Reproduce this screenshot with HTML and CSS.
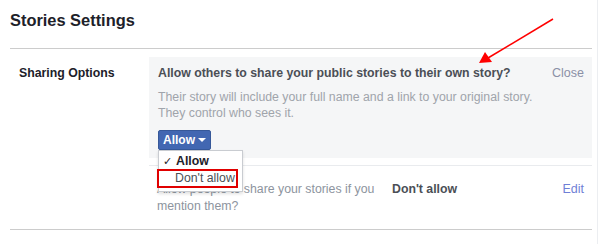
FILE: index.html
```html
<!DOCTYPE html>
<html lang="en">
  <head>
    <meta charset="UTF-8" />
    <title>Stories Settings</title>
    <link rel="stylesheet" href="styles.css">
  </head>
  <body>
    <div class="settings">
      <h2 class="settings-title">Stories Settings</h2>

      <div class="setting-row">
        <div class="setting-label">Sharing Options</div>
        <div class="setting-panel">
          <div class="panel-head">
            <span class="question">Allow others to share your public stories to their own story?</span>
            <a class="close-link">Close</a>
          </div>
          <p class="panel-desc">
            Their story will include your full name and a link to your original story.<br />
            They control who sees it.
          </p>
          <div class="dropdown">
            <button class="dropdown-btn" type="button">Allow <span class="caret"></span></button>
            <ul class="dropdown-menu">
              <li class="menu-item checked"><span class="check">&#10003;</span>Allow</li>
              <li class="menu-item highlighted">Don't allow</li>
            </ul>
          </div>
        </div>
      </div>

      <div class="setting-row second">
        <div class="setting-label"></div>
        <div class="setting-line">
          <div class="line-text">Allow people to share your stories if you mention them?</div>
          <div class="line-value">Don't allow</div>
          <a class="edit-link">Edit</a>
        </div>
      </div>
    </div>

    <div class="edge"></div>

    <!-- annotation arrow -->
    <svg class="arrow" width="600" height="80" viewBox="0 0 600 80">
      <line x1="553" y1="19" x2="488" y2="58" stroke="#ff0000" stroke-width="1.5" />
      <polygon points="479,63 485,52 492,62" fill="#ff0000" />
    </svg>
  </body>
</html>
```

FILE: styles.css
```css
* {
  box-sizing: border-box;
}

html,
body {
  margin: 0;
  padding: 0;
  background: #ffffff;
  font-family: "Liberation Sans", Arial, sans-serif;
  font-size: 12.3px;
  color: #1d2129;
}

.settings {
  width: 582px;
  margin-left: 10px;
}

.settings-title {
  margin: 0;
  height: 49px;
  padding-top: 11px;
  font-size: 16.4px;
  line-height: 19px;
  font-weight: bold;
  color: #1d2129;
  border-bottom: 1px solid #cccccc;
}

.setting-row {
  display: flex;
  padding-top: 8px;
}

.setting-label {
  width: 139px;
  flex-shrink: 0;
  padding: 8px 0 0 9px;
  line-height: 16px;
  font-weight: bold;
  color: #1d2129;
}

.setting-panel {
  flex: 1;
  background: #f5f6f7;
  padding: 8px 8px 8px 9px;
}

.panel-head {
  display: flex;
  justify-content: space-between;
  line-height: 16px;
}

.question {
  font-weight: bold;
  color: #4b4f56;
}

.close-link {
  color: #8b90a6;
  font-size: 12.5px;
}

.panel-desc {
  margin: 8px 0 9px;
  line-height: 16px;
  color: #a0a4ab;
}

.dropdown {
  position: relative;
  height: 20px;
}

.dropdown-btn {
  height: 20px;
  padding: 0 4px;
  border: 1px solid #365899;
  border-radius: 2px;
  background: #4267b2;
  color: #ffffff;
  font-family: inherit;
  font-size: 12px;
  font-weight: bold;
  display: flex;
  align-items: center;
  gap: 3px;
}

.caret {
  width: 0;
  height: 0;
  border-left: 4px solid transparent;
  border-right: 4px solid transparent;
  border-top: 4px solid #ffffff;
}

.dropdown-menu {
  position: absolute;
  top: 20px;
  left: 0;
  z-index: 2;
  width: 85px;
  margin: 0;
  padding: 2px 0 3px;
  list-style: none;
  background: #ffffff;
  border: 1px solid #c9ccd1;
  box-shadow: 0 2px 3px rgba(0, 0, 0, 0.12);
}

.menu-item {
  height: 17px;
  line-height: 17px;
  padding-left: 17px;
  color: #4b4f56;
  position: relative;
}

.menu-item.checked {
  font-weight: bold;
  color: #1d2129;
}

.check {
  position: absolute;
  left: 4px;
  font-weight: normal;
  font-size: 11px;
}

.menu-item.highlighted {
  margin-top: -1px;
  height: 19px;
  line-height: 15px;
  width: 81px;
  border: 2px solid #e00000;
  padding-left: 16px;
  margin-left: -2px;
}

.setting-row.second {
  padding-top: 7px;
  border-bottom: 1px solid #cccccc;
}

.setting-line {
  flex: 1;
  display: flex;
  align-items: flex-start;
  border-top: 1px solid #e9ebee;
  padding: 15px 8px 14px 8px;
  line-height: 17px;
}

.line-text {
  width: 235px;
  color: #8d949e;
}

.line-value {
  flex: 1;
  font-weight: bold;
  color: #4b4f56;
}

.edit-link {
  color: #6f7fd6;
  font-size: 12.5px;
}

.edge {
  position: absolute;
  top: 0;
  left: 597px;
  width: 1px;
  height: 244px;
  background: #eceef1;
}

.arrow {
  position: absolute;
  top: 0;
  left: 0;
  pointer-events: none;
}
```
